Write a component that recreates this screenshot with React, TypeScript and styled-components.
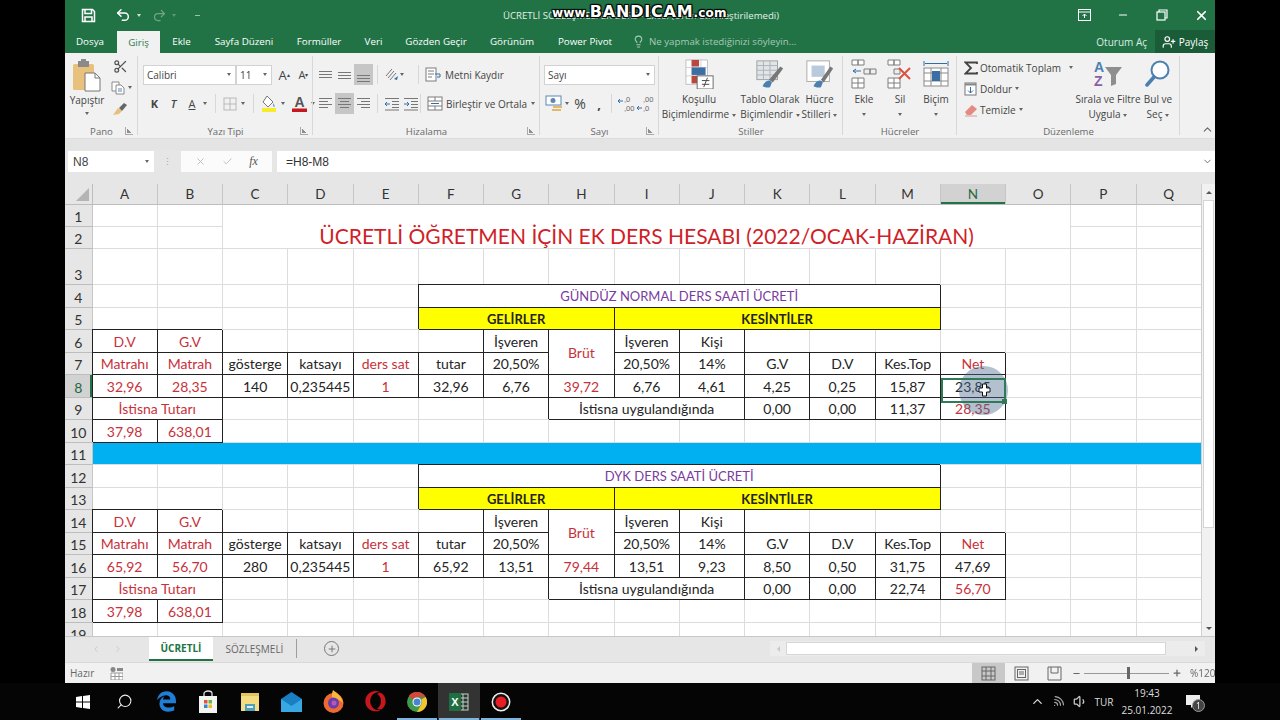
import React from "react";
import styled, { createGlobalStyle } from "styled-components";
import { Undo2, Redo2, X, Minus, Lightbulb, Check, Search, ChevronUp, ChevronDown, Scissors, UserPlus, Plus, ChevronLeft, ChevronRight, Volume1, Wifi } from "lucide-react";
import { FaEdgeLegacy, FaOpera } from "react-icons/fa6";

const UI = `"Open Sans", "Noto Sans", "Liberation Sans", sans-serif`;
const SHEET = `Lato, "Liberation Sans", sans-serif`;
const GREEN = "#217346";

const Global = createGlobalStyle`
  html, body { margin: 0; padding: 0; width: 1280px; height: 720px; overflow: hidden; background: #000; }
  * { box-sizing: border-box; }
`;

const Screen = styled.div`
  width: 1280px;
  height: 720px;
  display: flex;
  flex-direction: column;
  filter: blur(0.35px);
`;

const Frame = styled.div`
  position: relative;
  width: 1150px;
  height: 683px;
  margin: 0 65px;
  display: flex;
  flex-direction: column;
  background: #e6e6e6;
  font-family: ${UI};
`;

/* title bar */
const TitleBar = styled.div`
  position: relative;
  height: 30px;
  flex: none;
  background: ${GREEN};
  color: #fff;
  display: flex;
  align-items: center;
  padding-left: 14px;
`;
const QatButton = styled.span<{ $w?: number; $dim?: boolean; $ml?: number }>`
  width: ${(p) => p.$w ?? 20}px;
  margin-left: ${(p) => p.$ml ?? 0}px;
  display: flex;
  align-items: center;
  justify-content: center;
  opacity: ${(p) => (p.$dim ? 0.35 : 1)};
`;
const DocTitle = styled.div`
  position: absolute;
  left: 438px;
  top: 8px;
  font-size: 9.6px;
  line-height: 15px;
  color: #e4efe8;
  white-space: nowrap;
`;
const Watermark = styled.div`
  position: absolute;
  left: 487px;
  top: 2px;
  font-family: "DejaVu Sans", sans-serif;
  font-size: 12px;
  font-weight: 700;
  letter-spacing: 0.2px;
  line-height: 20px;
  color: #fff;
  white-space: nowrap;
  text-shadow: 0 0 1px #000, 1px 1px 1px #000, -1px -1px 1px #000, 1px -1px 1px #000, -1px 1px 1px #000;
  b { font-size: 16px; letter-spacing: 0.8px; }
`;
const WindowButtons = styled.div`
  margin-left: auto;
  display: flex;
  align-items: center;
  gap: 11px;
`;
const WindowButton = styled.span`
  width: 28px;
  display: flex;
  justify-content: center;
  align-items: center;
`;

/* tabs */
const TabRow = styled.div`
  height: 23px;
  flex: none;
  background: ${GREEN};
  display: flex;
  align-items: flex-end;
  color: #fff;
  font-size: 9.8px;
`;
const Tab = styled.div<{ $w: number; $active?: boolean; $ml?: number }>`
  width: ${(p) => p.$w}px;
  height: ${(p) => (p.$active ? 22 : 23)}px;
  margin-left: ${(p) => p.$ml ?? 0}px;
  flex: none;
  display: flex;
  align-items: center;
  justify-content: center;
  white-space: nowrap;
  background: ${(p) => (p.$active ? "#f1f1f1" : "transparent")};
  color: ${(p) => (p.$active ? "#2b7a50" : "#fff")};
`;
const TellMe = styled.div`
  display: flex;
  align-items: center;
  gap: 4px;
  margin-left: 8px;
  height: 23px;
  color: #a9c9b6;
  font-size: 9.7px;
`;
const SignIn = styled.div`
  margin-left: auto;
  height: 23px;
  display: flex;
  align-items: center;
  color: #dcebe2;
  font-size: 10px;
  padding-right: 8px;
`;
const Share = styled.div`
  width: 60px;
  height: 23px;
  background: #1a5c38;
  display: flex;
  align-items: center;
  justify-content: center;
  gap: 3px;
  font-size: 10px;
`;

/* ribbon */
const Ribbon = styled.div`
  position: relative;
  height: 85px;
  flex: none;
  background: #f1f1f1;
  display: flex;
  color: #444;
  font-size: 10px;
`;
const Group = styled.div<{ $w: number }>`
  position: relative;
  width: ${(p) => p.$w}px;
  flex: none;
  display: flex;
  flex-direction: column;
  &::after {
    content: "";
    position: absolute;
    right: 0;
    top: 3px;
    bottom: 3px;
    width: 1px;
    background: #d8d8d8;
  }
`;
const GroupBody = styled.div`
  flex: 1;
  min-height: 0;
  display: flex;
`;
const GroupLabel = styled.div`
  height: 12px;
  flex: none;
  text-align: center;
  line-height: 12px;
  font-size: 9.6px;
  color: #6a6a6a;
`;
const Launcher = styled.span`
  position: absolute;
  right: 5px;
  bottom: 3px;
  width: 8px;
  height: 8px;
  border-left: 1px solid #999;
  border-bottom: 1px solid #999;
  opacity: 0.8;
  &::after {
    content: "";
    position: absolute;
    left: 1px;
    bottom: 1px;
    width: 4px;
    height: 4px;
    background: linear-gradient(45deg, #777 50%, transparent 50%);
  }
`;
const Caret = styled.span<{ $ml?: number; $mt?: number; $color?: string }>`
  display: inline-block;
  margin-left: ${(p) => p.$ml ?? 3}px;
  margin-top: ${(p) => p.$mt ?? 0}px;
  width: 0;
  height: 0;
  flex: none;
  vertical-align: middle;
  border-left: 2.5px solid transparent;
  border-right: 2.5px solid transparent;
  border-top: 3px solid ${(p) => p.$color ?? "#666"};
`;
const Stack = styled.div<{ $w?: number; $pl?: number; $pt?: number; $gap?: number }>`
  width: ${(p) => (p.$w ? p.$w + "px" : "auto")};
  flex: none;
  display: flex;
  flex-direction: column;
  padding-left: ${(p) => p.$pl ?? 0}px;
  padding-top: ${(p) => p.$pt ?? 0}px;
  gap: ${(p) => p.$gap ?? 0}px;
`;
const ToolRow = styled.div<{ $h?: number }>`
  height: ${(p) => p.$h ?? 21}px;
  display: flex;
  align-items: center;
  white-space: nowrap;
`;
const ToolBtn = styled.span<{ $w?: number; $on?: boolean; $ml?: number; $fs?: number; $fw?: number; $italic?: boolean; $under?: boolean }>`
  width: ${(p) => p.$w ?? 19}px;
  height: 21px;
  margin-left: ${(p) => p.$ml ?? 0}px;
  flex: none;
  display: flex;
  align-items: center;
  justify-content: center;
  background: ${(p) => (p.$on ? "#c6c6c6" : "transparent")};
  font-size: ${(p) => p.$fs ?? 11}px;
  font-weight: ${(p) => p.$fw ?? 400};
  font-style: ${(p) => (p.$italic ? "italic" : "normal")};
  text-decoration: ${(p) => (p.$under ? "underline" : "none")};
`;
const GrowMark = styled.sup`
  font-size: 6px;
`;
const ToolText = styled.span`
  margin-left: 2px;
`;
const Sep = styled.span<{ $ml?: number }>`
  width: 1px;
  height: 19px;
  margin: 0 4px 0 ${(p) => p.$ml ?? 4}px;
  background: #d8d8d8;
`;
const Combo = styled.div<{ $w: number }>`
  width: ${(p) => p.$w}px;
  height: 20px;
  flex: none;
  background: #fff;
  border: 1px solid #d2d2d2;
  display: flex;
  align-items: center;
  justify-content: space-between;
  padding: 0 4px 0 3px;
  font-size: 10px;
  color: #444;
`;
const BigButton = styled.div<{ $w: number; $ml?: number }>`
  width: ${(p) => p.$w}px;
  margin-left: ${(p) => p.$ml ?? 0}px;
  flex: none;
  display: flex;
  flex-direction: column;
  align-items: center;
  padding-top: 6px;
  text-align: center;
  line-height: 15px;
  white-space: nowrap;
  color: #444;
`;
const BigIcon = styled.div<{ $h?: number }>`
  height: ${(p) => p.$h ?? 33}px;
  flex: none;
  display: flex;
  align-items: flex-start;
  justify-content: center;
`;
const CollapseBtn = styled.span`
  position: absolute;
  right: 1px;
  bottom: 2px;
  display: flex;
  color: #666;
`;

/* formula bar */
const RibbonGap = styled.div`
  height: 12px;
  flex: none;
  background: #e4e4e4;
  border-top: 1px solid #dcdcdc;
`;
const FormulaBar = styled.div`
  height: 34px;
  flex: none;
  display: flex;
  background: #e6e6e6;
  padding: 1px 0 0 3px;
  align-items: flex-start;
`;
const NameBox = styled.div`
  width: 86px;
  height: 21px;
  background: #fff;
  display: flex;
  align-items: center;
  justify-content: space-between;
  padding: 0 5px;
  font: 12px "Liberation Sans", sans-serif;
  color: #444;
`;
const Dots = styled.div`
  width: 27px;
  height: 21px;
  display: flex;
  align-items: center;
  justify-content: center;
  color: #aaa;
  font-size: 9px;
  letter-spacing: 0;
  writing-mode: vertical-rl;
`;
const FxBox = styled.div`
  width: 91px;
  height: 21px;
  background: #fbfbfb;
  display: flex;
  align-items: center;
  justify-content: space-around;
  padding: 0 6px;
  color: #bbb;
`;
const FxMark = styled.span`
  font: italic 12px "Liberation Serif", serif;
  color: #555;
`;
const FormulaInput = styled.div`
  flex: 1;
  height: 21px;
  margin-left: 5px;
  background: #fff;
  display: flex;
  align-items: center;
  justify-content: space-between;
  padding: 0 2px 0 9px;
  font: 12px "Liberation Sans", sans-serif;
  color: #333;
`;

/* sheet */
const SheetArea = styled.div`
  height: 452px;
  flex: none;
  display: flex;
`;
const Sheet = styled.div`
  width: 1136px;
  height: 452px;
  overflow: hidden;
  display: grid;
  background: #fff;
  grid-template-columns: 27.5px repeat(17, 65.25px);
  grid-template-rows: 21px 22px 22px 36px repeat(16, 22.5px);
  font-family: ${SHEET};
  font-size: 14px;
  color: #222;
`;
const Corner = styled.div`
  background: #e6e6e6;
  border-right: 1px solid #bdbdbd;
  border-bottom: 1px solid #bdbdbd;
  position: relative;
  &::after {
    content: "";
    position: absolute;
    right: 3px;
    bottom: 3px;
    border-left: 13px solid transparent;
    border-bottom: 13px solid #b4b4b4;
  }
`;
const Head = styled.div<{ $on?: boolean }>`
  background: ${(p) => (p.$on ? "#d2d2d2" : "#e6e6e6")};
  border-right: 1px solid #c6c6c6;
  border-bottom: 1px solid #bdbdbd;
  display: flex;
  align-items: center;
  justify-content: center;
  font-family: ${SHEET};
  font-size: 13.5px;
  color: ${(p) => (p.$on ? "#1e6b41" : "#333")};
`;
const ColHead = styled(Head)<{ $on?: boolean }>`
  box-shadow: ${(p) => (p.$on ? `inset 0 -2px 0 ${GREEN}` : "none")};
`;
const RowHead = styled(Head)<{ $on?: boolean }>`
  box-shadow: ${(p) => (p.$on ? `inset -2px 0 0 ${GREEN}` : "none")};
  font-size: 14px;
  align-items: flex-end;
  padding-bottom: 1px;
`;
const colorOf = { black: "#242424", red: "#c8313a", purple: "#7a3a9e", title: "#cf1f28" };
const Cell = styled.div<{
  $cs: number;
  $rs: number;
  $box?: boolean;
  $top?: boolean;
  $fill?: string;
  $tone: keyof typeof colorOf;
  $size?: number;
  $bold?: boolean;
}>`
  grid-column: span ${(p) => p.$cs};
  grid-row: span ${(p) => p.$rs};
  position: relative;
  z-index: ${(p) => (p.$top ? 2 : p.$box ? 1 : 0)};
  display: flex;
  align-items: ${(p) => (p.$tone === "title" ? "flex-end" : "center")};
  justify-content: center;
  padding-top: 1px;
  white-space: nowrap;
  min-width: 0;
  background: ${(p) => p.$fill ?? "#fff"};
  border-right: 1px solid ${(p) => (p.$box ? "#222" : "#dcdcdc")};
  border-bottom: 1px solid ${(p) => (p.$box ? "#222" : "#dcdcdc")};
  box-shadow: ${(p) => (p.$box ? "-1px -1px 0 #222" : "none")};
  color: ${(p) => colorOf[p.$tone]};
  font-size: ${(p) => p.$size ?? 14}px;
  font-weight: ${(p) => (p.$bold ? 700 : 400)};
`;
const Selection = styled.span`
  position: absolute;
  left: 0;
  right: -1px;
  top: 3px;
  bottom: -6px;
  border: 2px solid #2f7a57;
  &::after {
    content: "";
    position: absolute;
    right: -3px;
    bottom: -3px;
    width: 5px;
    height: 5px;
    background: #2f7a57;
  }
`;
const MouseHalo = styled.span`
  position: absolute;
  left: 18px;
  top: -9px;
  width: 49px;
  height: 49px;
  border-radius: 50%;
  background: rgba(72, 104, 140, 0.42);
`;
const CrossCursor = styled.svg`
  position: absolute;
  left: 37px;
  top: 8px;
`;

/* scroll bars */
const VScroll = styled.div`
  width: 14px;
  height: 452px;
  padding: 4px 0 3px;
  background: #f1f1f1;
  border-left: 1px solid #cfcfcf;
  display: flex;
  flex-direction: column;
  align-items: center;
  gap: 6px;
`;
const VThumb = styled.div`
  width: 11px;
  height: 328px;
  margin-bottom: auto;
  background: #fff;
  border: 1px solid #d4d4d4;
`;
const Arrow = styled.span<{ $dir: "up" | "down" | "left" | "right"; $dim?: boolean }>`
  width: 0;
  height: 0;
  flex: none;
  border: 3.5px solid transparent;
  border-${(p) => ({ up: "bottom", down: "top", left: "right", right: "left" }[p.$dir])}-color: ${(p) => (p.$dim ? "#c8c8c8" : "#555")};
`;

/* bottom bars */
const SheetBar = styled.div`
  height: 26px;
  flex: none;
  display: flex;
  align-items: flex-start;
  background: #e6e6e6;
  border-top: 1px solid #c8c8c8;
  font-size: 10px;
`;
const TabNav = styled.div`
  width: 84px;
  height: 24px;
  display: flex;
  align-items: center;
  justify-content: center;
  gap: 12px;
  color: #c6c6c6;
`;
const SheetTab = styled.div<{ $active?: boolean }>`
  width: ${(p) => (p.$active ? 64 : 83)}px;
  height: 24px;
  display: flex;
  align-items: center;
  justify-content: center;
  background: ${(p) => (p.$active ? "#fff" : "transparent")};
  color: ${(p) => (p.$active ? "#217346" : "#666")};
  font-weight: ${(p) => (p.$active ? 700 : 400)};
  border-bottom: ${(p) => (p.$active ? "2px solid #217346" : "none")};
`;
const TabDivider = styled.span`
  width: 1px;
  height: 19px;
  margin-top: 2px;
  background: #9d9d9d;
`;
const AddSheet = styled.span`
  margin: 4px 0 0 27px;
  width: 15px;
  height: 15px;
  border: 1.3px solid #777;
  border-radius: 50%;
  display: flex;
  align-items: center;
  justify-content: center;
  color: #666;
`;
const HScroll = styled.div`
  margin-left: auto;
  width: 435px;
  height: 15px;
  margin-top: 4px;
  margin-right: 10px;
  background: #ececec;
  display: flex;
  align-items: center;
  justify-content: space-between;
  padding: 0 4px;
`;
const HThumb = styled.div`
  width: 380px;
  height: 13px;
  margin: 0 auto 0 6px;
  background: #fff;
  border: 1px solid #d6d6d6;
`;
const StatusBar = styled.div`
  height: 21px;
  flex: none;
  background: #f1f1f1;
  border-top: 1px solid #dadada;
  display: flex;
  align-items: center;
  padding-left: 5px;
  color: #666;
  font-size: 10px;
`;
const MacroIcon = styled.span`
  margin-left: 16px;
  display: flex;
`;
const StatusRight = styled.div`
  margin-left: auto;
  height: 20px;
  display: flex;
  align-items: center;
`;
const ViewBtn = styled.span<{ $on?: boolean }>`
  width: 33px;
  height: 20px;
  display: flex;
  align-items: center;
  justify-content: center;
  background: ${(p) => (p.$on ? "#c8c8c8" : "transparent")};
`;
const ZoomOut = styled(Minus)`
  margin-left: 1px;
`;
const ZoomTrack = styled.div`
  position: relative;
  width: 85px;
  height: 1px;
  margin: 0 3px;
  background: #999;
`;
const ZoomKnob = styled.span`
  position: absolute;
  left: 43px;
  top: -6px;
  width: 3px;
  height: 12px;
  background: #666;
`;
const ZoomPct = styled.span`
  width: 33px;
  padding-left: 8px;
`;

/* taskbar */
const Taskbar = styled.div`
  height: 37px;
  flex: none;
  background: #050505;
  display: flex;
  align-items: center;
  padding-left: 62px;
  color: #eee;
  font-family: ${UI};
`;
const TaskIcon = styled.div<{ $active?: boolean; $running?: boolean }>`
  position: relative;
  width: 41.8px;
  height: 37px;
  flex: none;
  display: flex;
  align-items: center;
  justify-content: center;
  background: ${(p) => (p.$active ? "#333" : "transparent")};
  &::after {
    content: "";
    display: ${(p) => (p.$running ? "block" : "none")};
    position: absolute;
    left: 1px;
    right: 1px;
    bottom: 0;
    height: 2px;
    background: #7fb4dd;
  }
`;
const SearchGlass = styled(Search)`
  transform: scaleX(-1);
`;
const FanWifi = styled(Wifi)`
  transform: rotate(45deg);
`;
const Tray = styled.div`
  margin-left: auto;
  margin-right: 72px;
  display: flex;
  align-items: center;
  justify-content: flex-end;
  font-size: 10px;
  color: #ddd;
`;
const TrayIcon = styled.span<{ $w: number }>`
  width: ${(p) => p.$w}px;
  display: flex;
  justify-content: center;
`;
const Clock = styled.div`
  width: 62px;
  text-align: center;
  line-height: 17px;
`;
const Notify = styled.span`
  position: relative;
  width: 30px;
  display: flex;
  justify-content: center;
`;
const NotifyBadge = styled.span`
  position: absolute;
  left: 14px;
  top: 4px;
  width: 13px;
  height: 13px;
  border-radius: 50%;
  background: #444;
  border: 1px solid #999;
  color: #fff;
  font-size: 8.5px;
  line-height: 11px;
  text-align: center;
`;

/* ---- icons ---- */
const Save = () => (
  <svg width="15" height="15" viewBox="0 0 15 15" fill="none" stroke="#fff" strokeWidth="1.5">
    <path d="M1.5 1.5h10l2 2v10h-12z" />
    <path d="M4 1.5v4h6.500v-4M4 13.500v-4.500h7v4.500" />
  </svg>
);
const Paste = () => (
  <svg width="30" height="33" viewBox="0 0 30 33">
    <rect x="1" y="5" width="21" height="26" rx="1.500" fill="#e8c27c" />
    <rect x="6" y="2" width="11" height="6" fill="#8a8a8a" />
    <rect x="9" y="0" width="5" height="3" fill="#8a8a8a" />
    <path d="M13 14h10l5 5v13H13z" fill="#fff" stroke="#777" />
    <path d="M23 14v5h5" fill="none" stroke="#777" />
  </svg>
);
const CopyIcon = () => (
  <svg width="14" height="14" viewBox="0 0 14 14" fill="#fff" stroke="#8a8a8a">
    <path d="M1 1h7v9H1z" />
    <path d="M5 4h5l3 3v6H5z" />
    <path d="M7 8h4M7 10h4" stroke="#5b87b5" />
  </svg>
);
const Brush = () => (
  <svg width="16" height="14" viewBox="0 0 16 14">
    <path d="M1 13l5-7 4 3-3 3z" fill="#e6c07a" />
    <path d="M7 6l5-5 3 2-5 6z" fill="#666" />
  </svg>
);
const Lines = ({ rows }: { rows: [number, number, number?][] }) => (
  <svg width="15" height="15" viewBox="0 0 15 15" stroke="#777" strokeWidth="1">
    {rows.map(([x1, x2, y = 0], i) => (
      <path key={i} d={`M${x1} ${y + 0.5}H${x2}`} />
    ))}
  </svg>
);
const VAlign = ({ y }: { y: number }) => <Lines rows={[[1, 14, y], [1, 14, y + 3], [1, 14, y + 6]]} />;
const HAlign = ({ kind }: { kind: "l" | "c" | "r" }) => {
  const s = (w: number): [number, number] => (kind === "l" ? [1, 1 + w] : kind === "r" ? [14 - w, 14] : [7.5 - w / 2, 7.5 + w / 2]);
  return (
    <Lines
      rows={[
        [...s(13), 2],
        [...s(9), 5],
        [...s(13), 8],
        [...s(9), 11],
      ]}
    />
  );
};
const Orient = () => (
  <svg width="15" height="15" viewBox="0 0 15 15" fill="none">
    <path d="M2 9L8 2M4 11l6-7M6 13l6-7" stroke="#777" />
    <path d="M10 12l4-3-1 4z" fill="#2f6ea8" />
  </svg>
);
const Indent = ({ flip }: { flip?: boolean }) => (
  <svg width="16" height="14" viewBox="0 0 16 14" fill="none" stroke="#777">
    <path d="M1 1.500h14M8 4.500h7M8 7.500h7M8 10.500h7M1 13h14" />
    <path d={flip ? "M1 7h5M4 5l2 2-2 2" : "M1 7h5M3 5L1 7l2 2"} stroke="#2f6ea8" />
  </svg>
);
const WrapIcon = () => (
  <svg width="16" height="15" viewBox="0 0 16 15" fill="none" stroke="#7d7d7d">
    <rect x="1" y="1" width="10" height="13" fill="#fff" />
    <path d="M3 4h6M3 7h6M3 10h4" />
    <path d="M10 7h5v3h-3" stroke="#2f6ea8" />
  </svg>
);
const MergeIcon = () => (
  <svg width="16" height="15" viewBox="0 0 16 15" fill="#fff" stroke="#7d7d7d">
    <rect x="1" y="1" width="14" height="13" />
    <path d="M1 5h14M1 10h14M8 1v4M8 10v4" />
    <path d="M4 7.500h8" stroke="#2f6ea8" />
  </svg>
);
const BorderIcon = () => (
  <svg width="14" height="14" viewBox="0 0 14 14" fill="none" stroke="#b9b9b9">
    <rect x="1" y="1" width="12" height="12" />
    <path d="M7 1v12M1 7h12" />
  </svg>
);
const FillIcon = () => (
  <svg width="17" height="18" viewBox="0 0 17 18">
    <path d="M6 1l6 6-5 5-5-5z" fill="#fff" stroke="#777" />
    <path d="M12 8c2 2 2 4 1 4s-1-2-1-4z" fill="#6d9ec9" />
    <rect x="1" y="13" width="14" height="4" fill="#f6ec2b" />
  </svg>
);
const FontColor = () => (
  <svg width="15" height="18" viewBox="0 0 15 18">
    <text x="7.500" y="12" textAnchor="middle" fontFamily="Liberation Sans" fontSize="14" fill="#555" fontWeight="700">A</text>
    <rect x="0" y="13.500" width="15" height="3.500" fill="#c8161d" />
  </svg>
);
const Currency = () => (
  <svg width="19" height="18" viewBox="0 0 19 18">
    <rect x="1" y="1" width="15" height="9" fill="#fff" stroke="#5b87b5" />
    <circle cx="8" cy="5.500" r="2.500" fill="#5b87b5" />
    <rect x="8" y="11" width="9" height="2" fill="#e2b96a" />
    <rect x="7" y="14" width="9" height="2" fill="#e2b96a" />
  </svg>
);
const DecIcon = ({ more }: { more?: boolean }) => (
  <svg width="18" height="18" viewBox="0 0 18 18" fontFamily="Liberation Sans" fontSize="7.500" fill="#666">
    <text x="7" y="7">{more ? ",00" : ",0"}</text>
    <text x="7" y="16">{more ? ",0" : ",00"}</text>
    <path d="M1 6h5M3 4L1 6l2 2" stroke="#2f6ea8" fill="none" transform={more ? "translate(0 7)" : ""} />
  </svg>
);
const CondFormat = () => (
  <svg width="31" height="30" viewBox="0 0 31 32">
    <path d="M1 1h23v26H1z" fill="#fff" stroke="#bdbdbd" />
    <path d="M1 9h23M1 18h23M9 1v26M17 1v26" stroke="#d0d0d0" />
    <rect x="7" y="1" width="8" height="7" fill="#b8473d" />
    <rect x="7" y="9" width="15" height="8" fill="#3b6ea5" />
    <rect x="7" y="18" width="8" height="8" fill="#b8473d" />
    <rect x="13" y="18" width="17" height="14" fill="#fff" stroke="#666" />
    <path d="M18 23h8M18 27h8M24 20l-4 10" stroke="#444" />
  </svg>
);
const TableFormat = () => (
  <svg width="30" height="30" viewBox="0 0 30 32">
    <rect x="1" y="2" width="22" height="20" fill="#dfe5ea" stroke="#9e9e9e" />
    <path d="M1 7h22M1 12h22M1 17h22M8 2v20M15 2v20" stroke="#b0b0b0" />
    <path d="M14 22l12-14 3 2-11 15z" fill="#777" />
    <path d="M7 29c3-6 7-8 10-4l-2 5c-3 1-5 0-8-1z" fill="#4a7fb0" />
  </svg>
);
const CellStyle = () => (
  <svg width="30" height="30" viewBox="0 0 30 32">
    <rect x="1" y="2" width="24" height="22" fill="#fff" stroke="#a8a8a8" />
    <rect x="6" y="7" width="14" height="12" fill="#b8cadb" />
    <path d="M16 22l10-14 3 2-10 15z" fill="#777" />
    <path d="M8 29c3-6 7-8 10-4l-2 5c-3 1-5 0-8-1z" fill="#4a7fb0" />
  </svg>
);
const Insert = () => (
  <svg width="26" height="30" viewBox="0 0 26 30" fill="#fff" stroke="#7d7d7d">
    <path d="M1 1h6v5H1zM7 1h6v5H7z" />
    <path d="M13 10h6v5h-6zM19 10h6v5h-6z" fill="#eee" />
    <path d="M2 12h8M5 10l-3 2 3 2" stroke="#2f6ea8" fill="none" />
    <path d="M1 19h12v10H1zM7 19v10M1 24h12" />
  </svg>
);
const Remove = () => (
  <svg width="26" height="30" viewBox="0 0 26 30" fill="#fff" stroke="#7d7d7d">
    <path d="M1 1h6v5H1zM7 1h6v5H7z" />
    <path d="M7 10h6v5H7z" fill="#eee" />
    <path d="M1 19h12v10H1zM7 19v10M1 24h12" />
    <path d="M12 9l11 11M23 9L12 20" stroke="#d9543f" strokeWidth="2" />
  </svg>
);
const Format = () => (
  <svg width="26" height="30" viewBox="0 0 26 30" fill="none" stroke="#8a8a8a">
    <path d="M1 2v5M25 2v5M2 4.500h22" stroke="#2f6ea8" />
    <rect x="1" y="9" width="24" height="18" fill="#fff" />
    <path d="M8 9v18M18 9v18M1 14h24M1 22h24" />
    <rect x="9" y="12" width="8" height="10" fill="#3b6ea5" stroke="none" />
  </svg>
);
const Sum = () => (
  <svg width="14" height="14" viewBox="0 0 14 14" fill="none" stroke="#444" strokeWidth="1.800">
    <path d="M13 3V1.500H1.500L7 7l-5.500 5.500H13V11" />
  </svg>
);
const Fill = () => (
  <svg width="13" height="14" viewBox="0 0 13 14" fill="#fff" stroke="#777">
    <rect x="1" y="1" width="11" height="12" />
    <path d="M1 2.500h11" strokeWidth="2" stroke="#888" />
    <path d="M6.500 5v6M4 8.500l2.500 2.500L9 8.500" stroke="#2f6ea8" fill="none" />
  </svg>
);
const Eraser = () => (
  <svg width="14" height="14" viewBox="0 0 14 14">
    <path d="M1 9l7-7 5 4-6 6H3z" fill="#e58a82" />
    <path d="M1 13h12" stroke="#c9a0a0" />
  </svg>
);
const SortFilter = () => (
  <svg width="30" height="30" viewBox="0 0 30 30" fontFamily="Liberation Sans" fontWeight="700" fontSize="14">
    <text x="1" y="13" fill="#4a7fb0">A</text>
    <text x="1" y="27" fill="#8a5fa5">Z</text>
    <path d="M12 8h17l-6 8v9l-5 2V16z" fill="#8e8e8e" />
  </svg>
);
const Magnifier = () => (
  <svg width="26" height="30" viewBox="0 0 26 30" fill="none">
    <circle cx="15" cy="11" r="8.500" stroke="#4a7fb0" strokeWidth="2" fill="#fdfdfd" />
    <path d="M9 18L2 26" stroke="#4a7fb0" strokeWidth="3.500" strokeLinecap="round" />
  </svg>
);
const WinLogo = () => (
  <svg width="14" height="14" viewBox="0 0 14 14" fill="#fff">
    <path d="M0 2l6-.9V6.600H0zM7 1l7-1v6.600H7zM0 7.400h6v5.500L0 12zM7 7.400h7V14l-7-1z" />
  </svg>
);
const StoreIcon = () => (
  <svg width="20" height="24" viewBox="0 0 20 24" fill="none">
    <rect x="1" y="6" width="18" height="17" fill="#f3f3f3" />
    <path d="M6 6V3.500C6 2 8 1 10 1s4 1 4 2.500V6" stroke="#ddd" strokeWidth="1.300" />
    <rect x="6" y="10" width="3.500" height="3.500" fill="#e2533a" />
    <rect x="10.500" y="10" width="3.500" height="3.500" fill="#6db33f" />
    <rect x="6" y="14.500" width="3.500" height="3.500" fill="#2f88d4" />
    <rect x="10.500" y="14.500" width="3.500" height="3.500" fill="#f2b828" />
  </svg>
);
const FilesIcon = () => (
  <svg width="20" height="20" viewBox="0 0 20 20">
    <rect x="1" y="1" width="18" height="4" fill="#e4c35d" />
    <rect x="1" y="4" width="18" height="15" fill="#f4dc82" />
    <rect x="5" y="12" width="10" height="7" fill="#4fa0bd" />
    <rect x="7" y="14" width="6" height="2" fill="#dff0f6" />
  </svg>
);
const MailIcon = () => (
  <svg width="21" height="20" viewBox="0 0 21 20">
    <path d="M10.500 0L21 7v13H0V7z" fill="#1a7ec2" />
    <path d="M0 7l10.500 7L21 7v13H0z" fill="#37a8e4" />
  </svg>
);
const FirefoxIcon = () => (
  <svg width="21" height="23" viewBox="0 0 21 23">
    <circle cx="10.500" cy="13" r="10" fill="#ee6a32" />
    <path d="M10 0c4 3 9 6 10 13-3-3-7-5-10-4-2-3-1-6 0-9z" fill="#fbb53a" />
    <circle cx="10.500" cy="13" r="5.500" fill="#6a3cb0" />
    <circle cx="11" cy="13" r="2.500" fill="#b25bb5" />
  </svg>
);
const ChromeIcon = () => (
  <svg width="20" height="20" viewBox="0 0 20 20">
    <circle cx="10" cy="10" r="10" fill="#3f9b4b" />
    <path d="M10 0a10 10 0 018.700 5H10a5 5 0 00-4.300 2.500L1.800 4A10 10 0 0110 0z" fill="#d8453a" />
    <path d="M18.700 5A10 10 0 0110 20l4.300-7.500A5 5 0 0014.300 7.500z" fill="#f2c52e" />
    <circle cx="10" cy="10" r="4.500" fill="#fff" />
    <circle cx="10" cy="10" r="3.500" fill="#4b82d6" />
  </svg>
);
const ExcelIcon = () => (
  <svg width="20" height="20" viewBox="0 0 20 20" fontFamily="Liberation Sans" fontWeight="700">
    <rect x="9" y="2" width="10" height="16" fill="none" stroke="#bcd8c6" />
    <path d="M9 6h10M9 10h10M9 14h10M14 2v16" stroke="#bcd8c6" />
    <rect x="0" y="1" width="12" height="18" fill="#1f6f43" />
    <text x="6" y="14" textAnchor="middle" fontSize="11" fill="#fff">X</text>
  </svg>
);
const RecordIcon = () => (
  <svg width="20" height="20" viewBox="0 0 20 20">
    <circle cx="10" cy="10" r="8.700" fill="#111" stroke="#eee" strokeWidth="1.500" />
    <circle cx="10" cy="10" r="5.500" fill="#e81c24" />
  </svg>
);
const MacroSheet = () => (
  <svg width="13" height="13" viewBox="0 0 13 13" fill="#bbb">
    <circle cx="3" cy="2.500" r="2.500" fill="#888" />
    <rect x="7" y="1" width="6" height="3" fill="#888" />
    <path d="M1 6h12v7H1z" fill="#fff" stroke="#999" />
    <path d="M5 6v7M9 6v7M1 9.500h12" stroke="#999" />
  </svg>
);
const ViewGrid = () => (
  <svg width="15" height="15" viewBox="0 0 15 15" fill="none" stroke="#666">
    <rect x="1" y="1" width="13" height="13" />
    <path d="M5 1v13M10 1v13M1 5h13M1 10h13" />
  </svg>
);
const ViewPage = () => (
  <svg width="15" height="15" viewBox="0 0 15 15" fill="none" stroke="#666">
    <rect x="1" y="1" width="13" height="13" />
    <rect x="3.500" y="3.500" width="8" height="8" />
    <path d="M5 6h5M5 8h5" />
  </svg>
);
const ViewBreak = () => (
  <svg width="15" height="15" viewBox="0 0 15 15" fill="none" stroke="#666">
    <path d="M1 1h13v13H1zM4 1v6h7V1" />
  </svg>
);

/* ---- sheet data ---- */
type Tone = keyof typeof colorOf;
type Data = {
  c: number;
  r: number;
  cs?: number;
  rs?: number;
  text?: string;
  tone?: Tone;
  fill?: string;
  box?: boolean;
  size?: number;
  bold?: boolean;
};
const COLS = "ABCDEFGHIJKLMNOPQ".split("");
const YELLOW = "#ffff00";

function block(top: number, head: string, v: string[], below: string[]): Data[] {
  const r = (c: number, row: number, text: string, tone: Tone = "black", cs = 1, rs = 1): Data => ({ c, r: row, text, tone, cs, rs, box: true });
  const rowA = top + 4;
  return [
    { ...r(6, top, head, "purple", 8), size: 13 },
    { ...r(6, top + 1, "GELİRLER", "black", 3), fill: YELLOW, bold: true, size: 13 },
    { ...r(9, top + 1, "KESİNTİLER", "black", 5), fill: YELLOW, bold: true, size: 13 },
    r(1, top + 2, "D.V", "red"),
    r(2, top + 2, "G.V", "red"),
    r(7, top + 2, "İşveren"),
    r(8, top + 2, "Brüt", "red", 1, 2),
    r(9, top + 2, "İşveren"),
    r(10, top + 2, "Kişi"),
    r(1, top + 3, "Matrahı", "red"),
    r(2, top + 3, "Matrah", "red"),
    r(3, top + 3, "gösterge"),
    r(4, top + 3, "katsayı"),
    r(5, top + 3, "ders sat", "red"),
    r(6, top + 3, "tutar"),
    r(7, top + 3, "20,50%"),
    r(9, top + 3, "20,50%"),
    r(10, top + 3, "14%"),
    r(11, top + 3, "G.V"),
    r(12, top + 3, "D.V"),
    r(13, top + 3, "Kes.Top"),
    r(14, top + 3, "Net", "red"),
    ...v.map((text, i) => r(i + 1, rowA, text, [0, 1, 4, 7].includes(i) ? "red" : "black")),
    r(1, top + 5, "İstisna Tutarı", "red", 2),
    r(8, top + 5, "İstisna uygulandığında", "black", 3),
    r(11, top + 5, below[0]),
    r(12, top + 5, below[1]),
    r(13, top + 5, below[2]),
    r(14, top + 5, below[3], "red"),
    r(1, top + 6, "37,98", "red"),
    r(2, top + 6, "638,01", "red"),
  ];
}

const data: Data[] = [
  { c: 3, r: 1, cs: 13, rs: 2, text: "ÜCRETLİ ÖĞRETMEN İÇİN EK DERS HESABI (2022/OCAK-HAZİRAN)", tone: "title", size: 21 },
  { c: 1, r: 11, cs: 17, fill: "#00b0f0" },
  ...block(4, "GÜNDÜZ NORMAL DERS SAATİ ÜCRETİ", ["32,96", "28,35", "140", "0,235445", "1", "32,96", "6,76", "39,72", "6,76", "4,61", "4,25", "0,25", "15,87", "23,85"], ["0,00", "0,00", "11,37", "28,35"]),
  ...block(12, "DYK DERS SAATİ ÜCRETİ", ["65,92", "56,70", "280", "0,235445", "1", "65,92", "13,51", "79,44", "13,51", "9,23", "8,50", "0,50", "31,75", "47,69"], ["0,00", "0,00", "22,74", "56,70"]),
];

function buildRows() {
  const out: React.ReactNode[] = [<Corner key="corner" />];
  COLS.forEach((l) => out.push(<ColHead key={l} $on={l === "N"}>{l}</ColHead>));
  const covered = new Set<string>();
  for (let row = 1; row <= 19; row++) {
    out.push(<RowHead key={`h${row}`} $on={row === 8}>{row}</RowHead>);
    for (let col = 1; col <= 17; col++) {
      if (covered.has(`${col}:${row}`)) continue;
      const d = data.find((x) => x.c === col && x.r === row);
      const cs = d?.cs ?? 1;
      const rs = d?.rs ?? 1;
      for (let a = 0; a < cs; a++) for (let b = 0; b < rs; b++) covered.add(`${col + a}:${row + b}`);
      const selected = col === 14 && row === 8;
      out.push(
        <Cell key={`${col}:${row}`} $cs={cs} $rs={rs} $box={d?.box} $top={selected} $fill={d?.fill} $tone={d?.tone ?? "black"} $size={d?.size} $bold={d?.bold}>
          {d?.text}
          {selected && (
            <>
              <MouseHalo />
              <Selection />
              <CrossCursor width="13" height="14" viewBox="0 0 13 14">
                <path d="M4.500 1h4v4h3.500v4H8.500v4h-4V9H1V5h3.500z" fill="#fff" stroke="#111" />
              </CrossCursor>
            </>
          )}
        </Cell>
      );
    }
  }
  return out;
}

export default function App() {
  return (
    <Screen>
      <Global />
      <Frame>
        <TitleBar>
          <QatButton $w={18}><Save /></QatButton>
          <QatButton $w={26} $ml={13}><Undo2 size={16} strokeWidth={2.2} color="#fff" /></QatButton>
          <Caret $ml={1} $color="#cfe2d7" />
          <QatButton $w={26} $dim $ml={5}><Redo2 size={15} color="#fff" /></QatButton>
          <Caret $ml={0} $color="#5c9a78" />
          <QatButton $w={30} $ml={6}><Minus size={7} color="#fff" /></QatButton>
          <DocTitle>ÜCRETLİ SÖZLEŞMELİ EK DERS - Excel (Ürün Etkinleştirilemedi)</DocTitle>
          <Watermark>www.<b>BANDICAM</b>.com</Watermark>
          <WindowButtons>
            <WindowButton>
              <svg width="13" height="12" viewBox="0 0 13 12" fill="none" stroke="#fff"><rect x="0.500" y="0.500" width="12" height="11" /><path d="M0.500 3h12M6.500 9V5M4.500 7l2-2 2 2" /></svg>
            </WindowButton>
            <WindowButton><Minus size={12} strokeWidth={2.400} color="#fff" /></WindowButton>
            <WindowButton>
              <svg width="12" height="12" viewBox="0 0 12 12" fill="none" stroke="#fff" strokeWidth="1.200"><rect x="1" y="3" width="8" height="8" /><path d="M3 3V1h8v8H9" /></svg>
            </WindowButton>
            <WindowButton><X size={15} strokeWidth={2.800} color="#fff" /></WindowButton>
          </WindowButtons>
        </TitleBar>

        <TabRow>
          <Tab $w={50}>Dosya</Tab>
          <Tab $w={43} $active $ml={2}>Giriş</Tab>
          <Tab $w={43}>Ekle</Tab>
          <Tab $w={82}>Sayfa Düzeni</Tab>
          <Tab $w={68}>Formüller</Tab>
          <Tab $w={41}>Veri</Tab>
          <Tab $w={84}>Gözden Geçir</Tab>
          <Tab $w={68}>Görünüm</Tab>
          <Tab $w={78}>Power Pivot</Tab>
          <TellMe><Lightbulb size={13} color="#a9c9b6" />Ne yapmak istediğinizi söyleyin...</TellMe>
          <SignIn>Oturum Aç</SignIn>
          <Share><UserPlus size={14} color="#fff" />Paylaş</Share>
        </TabRow>

        <Ribbon>
          <Group $w={73}>
            <GroupBody>
              <BigButton $w={44}>
                <BigIcon $h={34}><Paste /></BigIcon>
                Yapıştır
                <Caret $ml={0} $mt={4} />
              </BigButton>
              <Stack $pt={3}>
                <ToolBtn $w={22}><Scissors size={15} color="#555" /></ToolBtn>
                <ToolBtn $w={24}><CopyIcon /><Caret /></ToolBtn>
                <ToolBtn $w={22}><Brush /></ToolBtn>
              </Stack>
            </GroupBody>
            <GroupLabel>Pano</GroupLabel>
            <Launcher />
          </Group>

          <Group $w={175}>
            <GroupBody>
              <Stack $pl={5} $pt={11} $gap={8}>
                <ToolRow>
                  <Combo $w={93}>Calibri<Caret /></Combo>
                  <Combo $w={36}>11<Caret /></Combo>
                  <ToolBtn $w={20} $ml={2} $fs={13}>A<GrowMark>▴</GrowMark></ToolBtn>
                  <ToolBtn $w={19} $fs={11}>A<GrowMark>▾</GrowMark></ToolBtn>
                </ToolRow>
                <ToolRow>
                  <ToolBtn $w={19} $ml={2} $fw={700}>K</ToolBtn>
                  <ToolBtn $w={19} $fw={600} $italic>T</ToolBtn>
                  <ToolBtn $w={18} $under>A</ToolBtn>
                  <Caret $ml={2} />
                  <Sep $ml={8} />
                  <ToolBtn $w={20}><BorderIcon /></ToolBtn>
                  <Caret $ml={1} />
                  <Sep $ml={8} />
                  <ToolBtn $w={22}><FillIcon /></ToolBtn>
                  <Caret $ml={1} />
                  <ToolBtn $w={22} $ml={3}><FontColor /></ToolBtn>
                  <Caret $ml={1} />
                </ToolRow>
              </Stack>
            </GroupBody>
            <GroupLabel>Yazı Tipi</GroupLabel>
            <Launcher />
          </Group>

          <Group $w={227}>
            <GroupBody>
              <Stack $pl={3} $pt={11} $gap={8}>
                <ToolRow>
                  <ToolBtn $w={19}><VAlign y={4} /></ToolBtn>
                  <ToolBtn $w={19}><VAlign y={5} /></ToolBtn>
                  <ToolBtn $on $w={19}><VAlign y={8} /></ToolBtn>
                  <Sep />
                  <ToolBtn $w={18}><Orient /></ToolBtn>
                  <Caret $ml={0} />
                  <Sep $ml={14} />
                  <ToolBtn $w={20}><WrapIcon /></ToolBtn>
                  <ToolText>Metni Kaydır</ToolText>
                </ToolRow>
                <ToolRow>
                  <ToolBtn $w={19}><HAlign kind="l" /></ToolBtn>
                  <ToolBtn $on $w={19}><HAlign kind="c" /></ToolBtn>
                  <ToolBtn $w={19}><HAlign kind="r" /></ToolBtn>
                  <Sep />
                  <ToolBtn $w={19}><Indent /></ToolBtn>
                  <ToolBtn $w={19}><Indent flip /></ToolBtn>
                  <Sep $ml={0} />
                  <ToolBtn $w={19}><MergeIcon /></ToolBtn>
                  <ToolText>Birleştir ve Ortala</ToolText>
                  <Caret $ml={4} />
                </ToolRow>
              </Stack>
            </GroupBody>
            <GroupLabel>Hizalama</GroupLabel>
            <Launcher />
          </Group>

          <Group $w={119}>
            <GroupBody>
              <Stack $pl={4} $pt={11} $gap={8}>
                <ToolRow><Combo $w={111}>Sayı<Caret /></Combo></ToolRow>
                <ToolRow>
                  <ToolBtn $w={20}><Currency /></ToolBtn>
                  <Caret $ml={1} />
                  <ToolBtn $w={22} $fs={14}>%</ToolBtn>
                  <ToolBtn $w={16} $fs={13} $fw={700}>,</ToolBtn>
                  <Sep />
                  <ToolBtn $w={19}><DecIcon /></ToolBtn>
                  <ToolBtn $w={19}><DecIcon more /></ToolBtn>
                </ToolRow>
              </Stack>
            </GroupBody>
            <GroupLabel>Sayı</GroupLabel>
            <Launcher />
          </Group>

          <Group $w={184}>
            <GroupBody>
              <BigButton $w={80}>
                <BigIcon><CondFormat /></BigIcon>
                Koşullu
                <span>Biçimlendirme<Caret /></span>
              </BigButton>
              <BigButton $w={62}>
                <BigIcon><TableFormat /></BigIcon>
                Tablo Olarak
                <span>Biçimlendir<Caret /></span>
              </BigButton>
              <BigButton $w={37}>
                <BigIcon><CellStyle /></BigIcon>
                Hücre
                <span>Stilleri<Caret /></span>
              </BigButton>
            </GroupBody>
            <GroupLabel>Stiller</GroupLabel>
          </Group>

          <Group $w={114}>
            <GroupBody>
              <BigButton $w={36} $ml={3}>
                <BigIcon><Insert /></BigIcon>
                Ekle
                <Caret $ml={0} $mt={6} />
              </BigButton>
              <BigButton $w={36}>
                <BigIcon><Remove /></BigIcon>
                Sil
                <Caret $ml={0} $mt={6} />
              </BigButton>
              <BigButton $w={36}>
                <BigIcon><Format /></BigIcon>
                Biçim
                <Caret $ml={0} $mt={6} />
              </BigButton>
            </GroupBody>
            <GroupLabel>Hücreler</GroupLabel>
          </Group>

          <Group $w={223}>
            <GroupBody>
              <Stack $w={116} $pl={6} $pt={4}>
                <ToolRow><ToolBtn $w={15}><Sum /></ToolBtn><ToolText>Otomatik Toplam</ToolText><Caret $ml={8} /></ToolRow>
                <ToolRow><ToolBtn $w={15}><Fill /></ToolBtn><ToolText>Doldur</ToolText><Caret /></ToolRow>
                <ToolRow><ToolBtn $w={15}><Eraser /></ToolBtn><ToolText>Temizle</ToolText><Caret /></ToolRow>
              </Stack>
              <BigButton $w={66} $ml={2}>
                <BigIcon><SortFilter /></BigIcon>
                Sırala ve Filtre
                <span>Uygula<Caret /></span>
              </BigButton>
              <BigButton $w={34}>
                <BigIcon><Magnifier /></BigIcon>
                Bul ve
                <span>Seç<Caret /></span>
              </BigButton>
            </GroupBody>
            <GroupLabel>Düzenleme</GroupLabel>
          </Group>
          <CollapseBtn><ChevronUp size={13} /></CollapseBtn>
        </Ribbon>
        <RibbonGap />

        <FormulaBar>
          <NameBox>N8<Caret /></NameBox>
          <Dots>⋯</Dots>
          <FxBox><X size={11} color="#bbb" /><Check size={11} color="#bbb" /><FxMark>fx</FxMark></FxBox>
          <FormulaInput>=H8-M8<ChevronDown size={11} color="#666" /></FormulaInput>
        </FormulaBar>

        <SheetArea>
          <Sheet>{buildRows()}</Sheet>
          <VScroll>
            <Arrow $dir="up" />
            <VThumb />
            <Arrow $dir="down" />
          </VScroll>
        </SheetArea>

        <SheetBar>
          <TabNav><ChevronLeft size={10} /><ChevronRight size={10} /></TabNav>
          <SheetTab $active>ÜCRETLİ</SheetTab>
          <SheetTab>SÖZLEŞMELİ</SheetTab>
          <TabDivider />
          <AddSheet><Plus size={10} /></AddSheet>
          <HScroll>
            <Arrow $dir="left" $dim />
            <HThumb />
            <Arrow $dir="right" />
          </HScroll>
        </SheetBar>

        <StatusBar>
          Hazır
          <MacroIcon><MacroSheet /></MacroIcon>
          <StatusRight>
            <ViewBtn $on><ViewGrid /></ViewBtn>
            <ViewBtn><ViewPage /></ViewBtn>
            <ViewBtn><ViewBreak /></ViewBtn>
            <ZoomOut size={9} strokeWidth={3} color="#666" />
            <ZoomTrack><ZoomKnob /></ZoomTrack>
            <Plus size={10} strokeWidth={3} color="#666" />
            <ZoomPct>%120</ZoomPct>
          </StatusRight>
        </StatusBar>
      </Frame>

      <Taskbar>
        <TaskIcon><WinLogo /></TaskIcon>
        <TaskIcon><SearchGlass size={17} strokeWidth={1.5} color="#eee" /></TaskIcon>
        <TaskIcon><FaEdgeLegacy size={21} color="#1f7fd6" /></TaskIcon>
        <TaskIcon><StoreIcon /></TaskIcon>
        <TaskIcon><FilesIcon /></TaskIcon>
        <TaskIcon><MailIcon /></TaskIcon>
        <TaskIcon><FirefoxIcon /></TaskIcon>
        <TaskIcon><FaOpera size={21} color="#c8161d" /></TaskIcon>
        <TaskIcon $running><ChromeIcon /></TaskIcon>
        <TaskIcon $active $running><ExcelIcon /></TaskIcon>
        <TaskIcon $running><RecordIcon /></TaskIcon>
        <Tray>
          <TrayIcon $w={22}><ChevronUp size={15} color="#ddd" /></TrayIcon>
          <TrayIcon $w={20}><FanWifi size={14} color="#aaa" /></TrayIcon>
          <TrayIcon $w={24}><Volume1 size={15} color="#ccc" /></TrayIcon>
          <TrayIcon $w={24}>TUR</TrayIcon>
          <Clock>19:43<br />25.01.2022</Clock>
          <Notify>
            <svg width="14" height="14" viewBox="0 0 14 14" fill="#eee"><path d="M0 0h14v10H8l-3 3v-3H0z" /></svg>
            <NotifyBadge>1</NotifyBadge>
          </Notify>
        </Tray>
      </Taskbar>
    </Screen>
  );
}
